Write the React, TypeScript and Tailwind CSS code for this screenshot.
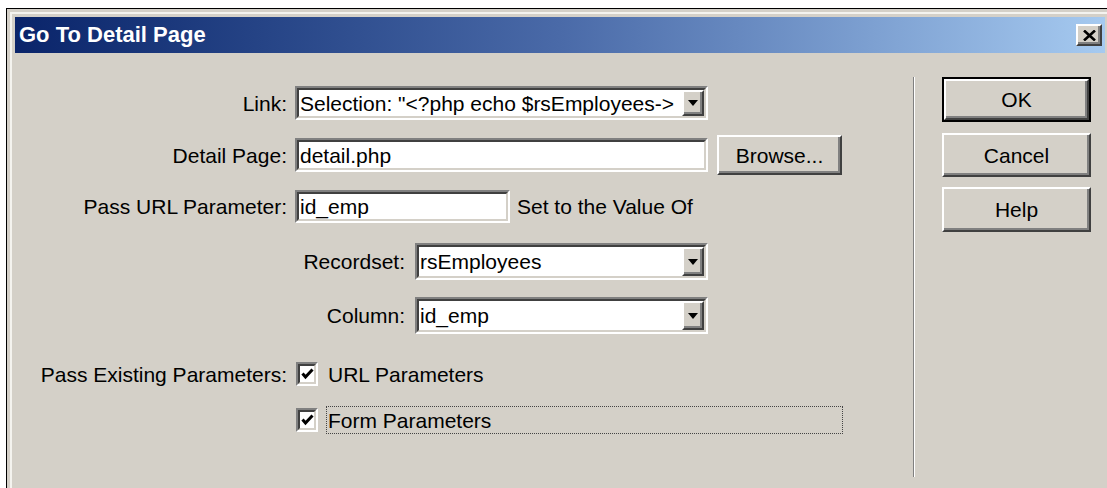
import React from 'react';

// Win-classic bevels
const Sunken = ({ className = '', children }: { className?: string; children?: React.ReactNode }) => (
  <div className={`border-2 border-t-[#808080] border-l-[#808080] border-r-white border-b-white ${className}`}>
    <div className="h-full flex items-stretch border-2 border-t-[#404040] border-l-[#404040] border-r-[#d4d0c8] border-b-[#d4d0c8] bg-white">
      {children}
    </div>
  </div>
);

const raised =
  'border-2 border-t-white border-l-white border-r-[#404040] border-b-[#404040] shadow-[inset_-2px_-2px_0_#808080] bg-[#d4d0c8]';

const Button = ({ className = '', label, primary = false }: { className?: string; label: string; primary?: boolean }) =>
  primary ? (
    <div className={`border-2 border-black ${className}`}>
      <div className={`h-full flex items-center justify-center ${raised}`}>{label}</div>
    </div>
  ) : (
    <div className={`flex items-center justify-center ${raised} ${className}`}>{label}</div>
  );

const Combo = ({ className = '', value }: { className?: string; value: string }) => (
  <Sunken className={className}>
    <span className="flex-1 flex items-center overflow-hidden whitespace-nowrap pl-[1px]">{value}</span>
    <span className={`w-[22px] flex items-center justify-center ${raised}`}>
      <svg width="10" height="6" viewBox="0 0 10 6">
        <polygon points="0,0 10,0 5,6" fill="#000" />
      </svg>
    </span>
  </Sunken>
);

const Check = () => (
  <Sunken className="w-[22px] h-[24px]">
    <span className="flex-1 flex items-center justify-center">
      <svg width="13" height="12" viewBox="0 0 13 12">
        <polyline points="1.5,5.5 4.5,9 11.5,1.5" fill="none" stroke="#000" strokeWidth="3" />
      </svg>
    </span>
  </Sunken>
);

const App = () => {
  return (
    <div className="w-[1107px] h-[488px] overflow-hidden bg-white pt-[8px] pl-[6px] font-['Liberation_Sans',Arial,sans-serif] text-[21px] leading-none text-black">
      <div className="h-[480px] border-l border-t border-black bg-[#d4d0c8] pt-[3px] pl-[3px]">
        <div className="h-full border-l-2 border-t-2 border-[#f4f3ef] pt-[3px] pl-[3px] pr-[2px]">
          {/* title bar */}
          <div className="h-[36px] flex items-center justify-between pl-[4px] pr-[3px] bg-gradient-to-r from-[#0a246a] via-[#4a6aa8] to-[#a6caf0]">
            <span className="text-white font-bold text-[22px]">Go To Detail Page</span>
            <div className={`w-[26px] h-[22px] flex items-center justify-center ${raised}`}>
              <svg width="13" height="11" viewBox="0 0 13 11">
                <path d="M1 0.5 L12 10.5 M12 0.5 L1 10.5" stroke="#000" strokeWidth="2.6" />
              </svg>
            </div>
          </div>

          <div className="flex">
            <div className="w-[898px] flex flex-col">
              <div className="mt-[33px] h-[34px] flex items-center">
                <span className="w-[272px] text-right">Link:</span>
                <Combo className="ml-[8px] w-[413px] h-[34px]" value={'Selection: "<?php echo $rsEmployees->'} />
              </div>

              <div className="mt-[15px] h-[40px] flex items-center">
                <span className="w-[272px] text-right">Detail Page:</span>
                <Sunken className="ml-[8px] w-[413px] h-[34px]">
                  <span className="flex items-center pl-[1px]">detail.php</span>
                </Sunken>
                <Button className="ml-[9px] w-[125px] h-[40px]" label="Browse..." />
              </div>

              <div className="mt-[15px] h-[33px] flex items-center">
                <span className="w-[272px] text-right">Pass URL Parameter:</span>
                <Sunken className="ml-[8px] w-[215px] h-[33px]">
                  <span className="flex items-center pl-[1px]">id_emp</span>
                </Sunken>
                <span className="ml-[7px]">Set to the Value Of</span>
              </div>

              <div className="mt-[20px] h-[37px] flex items-center">
                <span className="w-[390px] text-right">Recordset:</span>
                <Combo className="ml-[10px] w-[293px] h-[37px]" value="rsEmployees" />
              </div>

              <div className="mt-[17px] h-[37px] flex items-center">
                <span className="w-[390px] text-right">Column:</span>
                <Combo className="ml-[10px] w-[293px] h-[37px]" value="id_emp" />
              </div>

              <div className="mt-[25px] h-[30px] flex items-center">
                <span className="w-[272px] text-right">Pass Existing Parameters:</span>
                <div className="ml-[9px]">
                  <Check />
                </div>
                <span className="ml-[10px]">URL Parameters</span>
              </div>

              <div className="mt-[17px] h-[28px] flex items-center">
                <div className="ml-[281px]">
                  <Check />
                </div>
                <div className="ml-[8px] w-[517px] h-full flex items-center border border-dotted border-[#444] pl-[1px]">
                  Form Parameters
                </div>
              </div>
            </div>

            <div className="mt-[24px] h-[400px] w-[2px] border-l border-r border-l-[#808080] border-r-white" />

            <div className="ml-[27px] w-[149px] flex flex-col">
              <Button primary className="mt-[24px] h-[45px]" label="OK" />
              <Button className="mt-[11px] h-[44px]" label="Cancel" />
              <Button className="mt-[10px] h-[45px]" label="Help" />
            </div>
          </div>
        </div>
      </div>
    </div>
  );
};

export default App;
